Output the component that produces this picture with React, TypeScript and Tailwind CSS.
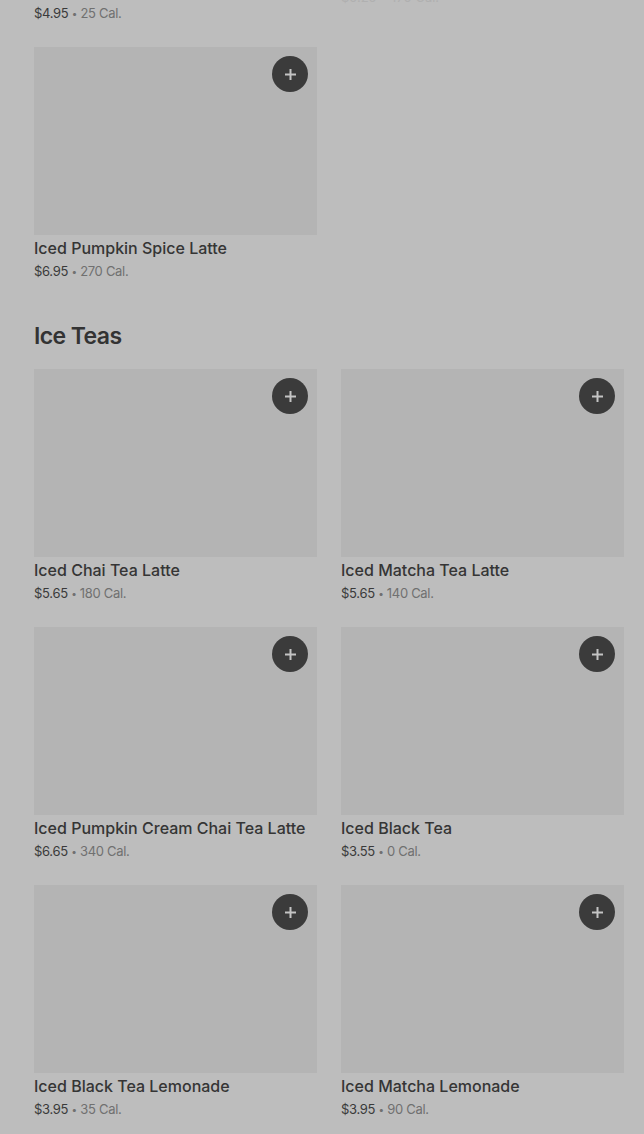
import React from 'react';

interface Item {
  name: string;
  price: string;
  cal: string;
}

const iceTeas: Item[] = [
  { name: 'Iced Chai Tea Latte', price: '$5.65', cal: '180 Cal.' },
  { name: 'Iced Matcha Tea Latte', price: '$5.65', cal: '140 Cal.' },
  { name: 'Iced Pumpkin Cream Chai Tea Latte', price: '$6.65', cal: '340 Cal.' },
  { name: 'Iced Black Tea', price: '$3.55', cal: '0 Cal.' },
  { name: 'Iced Black Tea Lemonade', price: '$3.95', cal: '35 Cal.' },
  { name: 'Iced Matcha Lemonade', price: '$3.95', cal: '90 Cal.' },
];

const PriceLine: React.FC<{ price: string; cal: string }> = ({ price, cal }) => (
  <p className="h-[18px] overflow-hidden text-[13px] leading-[18px] tracking-[-0.3px]">
    <span className="text-[#3a3a3a]">{price}</span>
    <span className="text-[#707070]"> <span className="text-[10px] leading-[10px] relative -top-[1px]">•</span> {cal}</span>
  </p>
);

const ItemCard: React.FC<{ item: Item }> = ({ item }) => (
  <div className="flex flex-col">
    <div className="relative h-[188px] bg-[#b4b4b4]">
      <button className="absolute top-[9px] right-[9px] w-9 h-9 rounded-full bg-[#3b3b3b] flex items-center justify-center">
        <svg width="13" height="13" viewBox="0 0 13 13" fill="none">
          <path d="M6.5 1v11M1 6.5h11" stroke="#c4c4c4" strokeWidth="2" />
        </svg>
      </button>
    </div>
    <h3 className="mt-[2px] text-[16px] leading-[22px] font-medium text-[#353535]">{item.name}</h3>
    <div className="mt-[3px]">
      <PriceLine price={item.price} cal={item.cal} />
    </div>
  </div>
);

export default function App() {
  return (
    <div className="min-h-[1134px] bg-[#bdbdbd] overflow-hidden pl-[34px] pr-[20px]" style={{ fontFamily: 'Inter, "Noto Sans", sans-serif' }}>
      <div className="grid grid-cols-2 gap-x-6">
        <div className="mt-[4px]">
          <PriceLine price="$4.95" cal="25 Cal." />
        </div>
        <div className="-mt-[12px] text-[13px] leading-[18px] text-[#b0b0b0]">$5.25 • 170 Cal.</div>
      </div>

      <div className="grid grid-cols-2 gap-x-6 mt-[25px]">
        <ItemCard item={{ name: 'Iced Pumpkin Spice Latte', price: '$6.95', cal: '270 Cal.' }} />
      </div>

      <h2 className="mt-[40px] mb-[17px] text-[23px] leading-[32px] font-semibold text-[#333333] tracking-[-0.6px]">Ice Teas</h2>

      <div className="grid grid-cols-2 gap-x-6 gap-y-[25px]">
        {iceTeas.map((item) => (
          <ItemCard key={item.name} item={item} />
        ))}
      </div>
    </div>
  );
}
